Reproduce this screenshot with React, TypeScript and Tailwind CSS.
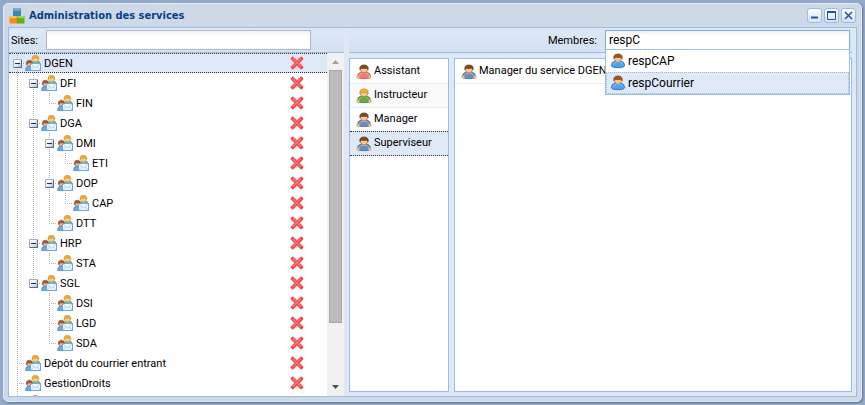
import { useState, type ReactNode } from "react";

type Segment = "line" | "blank" | "tee" | "end";

interface TreeRow {
  label?: string;
  segments: Segment[];
  open?: boolean;
  selected?: boolean;
}

const TREE: TreeRow[] = [
  { label: "DGEN", segments: ["tee"], open: true, selected: true },
  { label: "DFI", segments: ["line", "tee"], open: true },
  { label: "FIN", segments: ["line", "line", "end"] },
  { label: "DGA", segments: ["line", "tee"], open: true },
  { label: "DMI", segments: ["line", "line", "tee"], open: true },
  { label: "ETI", segments: ["line", "line", "line", "end"] },
  { label: "DOP", segments: ["line", "line", "tee"], open: true },
  { label: "CAP", segments: ["line", "line", "line", "end"] },
  { label: "DTT", segments: ["line", "line", "end"] },
  { label: "HRP", segments: ["line", "tee"], open: true },
  { label: "STA", segments: ["line", "line", "end"] },
  { label: "SGL", segments: ["line", "end"], open: true },
  { label: "DSI", segments: ["line", "blank", "tee"] },
  { label: "LGD", segments: ["line", "blank", "tee"] },
  { label: "SDA", segments: ["line", "blank", "end"] },
  { label: "Dépôt du courrier entrant", segments: ["tee"] },
  { label: "GestionDroits", segments: ["tee"] },
  { segments: ["tee"] },
];

function TreeLines({ kind }: { kind: Segment }) {
  const paths: Record<Segment, string> = {
    line: "M8.5 0V20",
    blank: "",
    tee: "M8.5 0V20M10 10.5H16",
    end: "M8.5 0V11M10 10.5H16",
  };
  return (
    <svg width="16" height="20" viewBox="0 0 16 20" className="block" shapeRendering="crispEdges" aria-hidden="true">
      <path d={paths[kind]} stroke="#b4b4b4" strokeDasharray="1 1" fill="none" />
    </svg>
  );
}

function ToggleIcon() {
  return (
    <svg width="9" height="9" viewBox="0 0 9 9" className="block" shapeRendering="crispEdges" aria-hidden="true">
      <defs>
        <linearGradient id="toggleFill" x1="0" y1="0" x2="1" y2="1">
          <stop offset="0.3" stopColor="#fff" />
          <stop offset="1" stopColor="#a9b8cf" />
        </linearGradient>
      </defs>
      <rect x="0.5" y="0.5" width="8" height="8" fill="url(#toggleFill)" stroke="#a3b1c8" />
      <path d="M8.5 1V8.5H1" stroke="#526a91" fill="none" />
      <path d="M2 4.5H7" stroke="#1d2d50" />
    </svg>
  );
}

function GroupIcon() {
  return (
    <svg width="16" height="16" viewBox="0 0 16 16" className="block shrink-0" aria-hidden="true">
      <path d="M7 9.5V8.5Q7.5 5.6 10.4 5.6Q15 5.6 15.6 9.5Z" fill="#7fc271" stroke="#4b9445" strokeWidth="0.7" />
      <circle cx="10.4" cy="3.9" r="2.9" fill="#fad0a2" stroke="#c98f45" strokeWidth="0.6" />
      <path d="M7 4.8Q6.5 0.2 10.4 0.2Q14.3 0.2 13.8 4.8L12.6 3.1Q10.4 3.7 8.3 3.1Z" fill="#eda92f" stroke="#cf922d" strokeWidth="0.5" />
      <path d="M0.7 15.6Q0.5 11.2 4 11L7 12V15.6Z" fill="#62adf1" stroke="#3479c7" strokeWidth="0.7" />
      <circle cx="4.3" cy="8.8" r="2.6" fill="#f4ba8b" stroke="#9a582d" strokeWidth="0.6" />
      <path d="M1.4 9.6Q0.9 5.2 4.4 5.2Q7.7 5.3 7.2 8.2L3.1 8Z" fill="#a75d32" stroke="#81401e" strokeWidth="0.5" />
      <rect x="5.5" y="8.5" width="10" height="7" fill="#eef6ff" stroke="#73a5e2" />
      <path d="M6 9L10.5 13L15 9M6 15L9 11.8M15 15L12 11.8" stroke="#a6c8ee" strokeWidth="0.8" fill="none" />
    </svg>
  );
}

interface Palette {
  hair: string;
  hairEdge: string;
  body: string;
  bodyEdge: string;
  light: string;
  tie?: boolean;
  hands?: boolean;
}

const PALETTES = {
  red: { hair: "#7a4924", hairEdge: "#5f3818", body: "#f47c7c", bodyEdge: "#cc5252", light: "#ffa9a6", hands: true },
  green: { hair: "#f2b32d", hairEdge: "#c48716", body: "#66ad43", bodyEdge: "#3c7d26", light: "#91cd6c", hands: true },
  suit: { hair: "#7a4924", hairEdge: "#5f3818", body: "#5f93c8", bodyEdge: "#3a6ba2", light: "#8db6de", tie: true, hands: true },
  member: { hair: "#9a5820", hairEdge: "#6d3a12", body: "#4ca6f6", bodyEdge: "#235fae", light: "#8accff" },
} satisfies Record<string, Palette>;

function PersonIcon({ kind }: { kind: keyof typeof PALETTES }) {
  const p: Palette = PALETTES[kind];
  return (
    <svg width="16" height="16" viewBox="0 0 16 16" className="block shrink-0" aria-hidden="true">
      <path d="M1.4 12.6Q1.5 8.8 5 8.2H11Q14.5 8.8 14.6 12.6Q14.5 14.6 8 14.6Q1.5 14.6 1.4 12.6Z" fill={p.body} stroke={p.bodyEdge} strokeWidth="0.8" />
      <path d="M3.3 11.5Q3.8 9.6 5.8 9.4M12.7 11.5Q12.2 9.6 10.2 9.4" stroke={p.light} fill="none" />
      {p.hands && (
        <>
          <circle cx="2.4" cy="13" r="1.4" fill="#ffcf9c" stroke="#bd8150" strokeWidth="0.6" />
          <circle cx="13.6" cy="13" r="1.4" fill="#ffcf9c" stroke="#bd8150" strokeWidth="0.6" />
        </>
      )}
      {p.tie && (
        <>
          <path d="M5.8 8H10.2L8 12Z" fill="#e5eef8" />
          <path d="M7.5 8.5H8.5L8.7 11.6L8 12.8L7.3 11.6Z" fill="#d34342" />
        </>
      )}
      <ellipse cx="8" cy="5.4" rx="3.6" ry="3.4" fill="#fbc796" stroke="#a76d40" strokeWidth="0.7" />
      <path d="M3.9 5.8Q2.9 1 8 0.9Q13.1 1 12.1 5.8L10.9 4.2Q8.2 4.9 5.2 4.2Z" fill={p.hair} stroke={p.hairEdge} strokeWidth="0.6" />
      {kind === "member" && <path d="M5.6 8.4Q8 10.2 10.4 8.4" fill="#fbc796" />}
    </svg>
  );
}

function DeleteIcon() {
  return (
    <svg width="14" height="14" viewBox="0 0 14 14" className="block" aria-hidden="true">
      <path d="M2.8 2.8L11.2 11.2M11.2 2.8L2.8 11.2" stroke="#f9b4b4" strokeWidth="4.4" strokeLinecap="round" />
      <path d="M2.8 2.8L11.2 11.2M11.2 2.8L2.8 11.2" stroke="#ec3f44" strokeWidth="3.2" strokeLinecap="square" />
      <path d="M2.6 2.6L11 11M11 2.6L2.6 11" stroke="#fb7577" strokeWidth="1.4" />
    </svg>
  );
}

function CubesIcon() {
  return (
    <svg width="16" height="16" viewBox="0 0 16 16" className="block shrink-0" aria-hidden="true">
      <rect x="4" y="0.5" width="8" height="7.5" fill="#3b87ad" />
      <path d="M4 0.5H12L11 2.8H5Z" fill="#71b4cf" />
      <rect x="0.5" y="8" width="7.5" height="7.5" fill="#f38b14" />
      <path d="M0.5 8H8L7 10.3H1.5Z" fill="#ffc35a" />
      <rect x="8" y="8" width="7.5" height="7.5" fill="#65ac1e" />
      <path d="M8 8H15.5L14.5 10.3H9Z" fill="#a2d554" />
    </svg>
  );
}

function WindowButton({ label, children }: { label: string; children: ReactNode }) {
  return (
    <button
      type="button"
      aria-label={label}
      className="flex size-[15px] items-center justify-center rounded-[3px] border border-[#99bce8] bg-linear-to-b from-white to-[#d4e3f8]"
    >
      <svg width="11" height="11" viewBox="0 0 11 11" className="block" stroke="#2850a7" fill="none" aria-hidden="true">
        {children}
      </svg>
    </button>
  );
}

function TreePanel() {
  return (
    <div className="flex min-h-0 flex-1 bg-white">
      <ul className="min-w-0 flex-1 overflow-hidden" aria-label="Sites">
        {TREE.map((row, index) => (
          <li
            key={index}
            className={`relative flex h-5 items-center ${
              row.selected
                ? "bg-[#dfe8f6] before:pointer-events-none before:absolute before:inset-0 before:border-y before:border-dotted before:border-[#333]"
                : ""
            }`}
          >
            {row.segments.map((kind, i) => (
              <span key={i} className="relative">
                <TreeLines kind={kind} />
                {row.open && i === row.segments.length - 1 && (
                  <button type="button" aria-label={`Réduire ${row.label}`} className="absolute top-1.5 left-1">
                    <ToggleIcon />
                  </button>
                )}
              </span>
            ))}
            <GroupIcon />
            <span className="ml-[3px] flex-1 pt-0.5 whitespace-nowrap">{row.label}</span>
            {row.label && (
              <button type="button" aria-label={`Supprimer ${row.label}`} className="mr-[23px]">
                <DeleteIcon />
              </button>
            )}
          </li>
        ))}
      </ul>
      <div className="flex w-[17px] shrink-0 flex-col items-center bg-[#f1f1f1]" aria-hidden="true">
        <svg width="17" height="17" viewBox="0 0 17 17" className="block shrink-0">
          <path d="M5 11L8.5 7L12 11Z" fill="#a0a0a0" />
        </svg>
        <div className="flex min-h-0 w-full flex-1 flex-col px-0.5">
          <div className="h-[82%] border border-[#a8a8a8] bg-[#bcbcbc]" />
        </div>
        <svg width="17" height="17" viewBox="0 0 17 17" className="block shrink-0">
          <path d="M5 6L8.5 10L12 6Z" fill="#505050" />
        </svg>
      </div>
    </div>
  );
}

const ROLES: { label: string; kind: keyof typeof PALETTES }[] = [
  { label: "Assistant", kind: "red" },
  { label: "Instructeur", kind: "green" },
  { label: "Manager", kind: "suit" },
  { label: "Superviseur", kind: "suit" },
];

function RoleList() {
  return (
    <ul className="w-[100px] shrink-0 border border-[#99bce8] bg-white pt-px" aria-label="Rôles">
      {ROLES.map((role, i) => (
        <li
          key={role.label}
          className={
            i === 3
              ? "-mt-px border-y border-dotted border-[#333] bg-[#dfe8f6]"
              : i === 1
                ? "border-b border-[#ededed] bg-[#fafafa]"
                : "border-b border-[#ededed]"
          }
        >
          <button type="button" className="flex h-[23px] w-full items-center gap-0.5 pl-1.5">
            <PersonIcon kind={role.kind} />
            {role.label}
          </button>
        </li>
      ))}
    </ul>
  );
}

function MemberSearch() {
  const [query, setQuery] = useState("respC");
  return (
    <div className="relative w-[245px]">
      <input
        id="membres"
        type="text"
        value={query}
        autoFocus
        onChange={(e) => setQuery(e.target.value)}
        className="block h-5 w-full border border-[#7eadd9] bg-white bg-linear-to-b from-[#f0f0f0] to-white to-25% px-[3px] text-xs outline-none"
      />
      <ul className="absolute inset-x-0 top-[19px] z-10 border border-[#99bce8] bg-white text-xs">
        <li>
          <button type="button" className="flex h-[22px] w-full items-center gap-0.5 px-1">
            <PersonIcon kind="member" />
            respCAP
          </button>
        </li>
        <li>
          <button
            type="button"
            className="flex h-[22px] w-full items-center gap-0.5 border border-dotted border-[#a3bae9] bg-[#dfe8f6] px-[3px]"
          >
            <PersonIcon kind="member" />
            respCourrier
          </button>
        </li>
      </ul>
    </div>
  );
}

export default function App() {
  return (
    <div className="h-screen overflow-hidden bg-[#92a9cb] p-[3px] font-[Roboto,sans-serif] text-[11px] text-black">
      <main className="flex h-full flex-col rounded-[5px] border border-[#e4ebf4] bg-[#ced9e7] px-1 pb-1 shadow-[1px_1px_2px_#60708c]">
        <header className="flex h-[23px] shrink-0 items-center gap-1 pr-px pl-px">
          <CubesIcon />
          <h1 className="flex-1 pt-0.5 font-['DejaVu_Sans_Condensed','DejaVu_Sans',sans-serif] font-bold text-[#04408c]">
            Administration des services
          </h1>
          <div className="flex gap-0.5">
            <WindowButton label="Réduire">
              <path d="M2 7.5H9" strokeWidth="2" />
            </WindowButton>
            <WindowButton label="Agrandir">
              <path d="M1.5 3V9.5H9.5V3M1 2.5H10" />
              <path d="M1 2H10" strokeWidth="2" />
            </WindowButton>
            <WindowButton label="Fermer">
              <path d="M2 2L9 9M9 2L2 9" strokeWidth="1.6" />
            </WindowButton>
          </div>
        </header>

        <div className="flex min-h-0 flex-1 gap-[5px] border border-[#99bce8] bg-[#dfe8f6] pr-1">
          <section className="flex w-[335px] shrink-0 flex-col">
            <div className="flex h-[25px] shrink-0 items-center border-b border-[#99bce8] bg-linear-to-b from-[#dfe9f5] to-[#d3e1f1] pl-0.5">
              <label htmlFor="sites" className="w-[35px] pt-0.5">
                Sites:
              </label>
              <input
                id="sites"
                type="text"
                className="h-5 w-[265px] border border-[#b5b8c8] bg-white bg-linear-to-b from-[#f0f0f0] to-white to-25% px-[3px] text-xs outline-none"
              />
            </div>
            <TreePanel />
          </section>

          <section className="flex min-w-0 flex-1 flex-col">
            <div className="flex h-[25px] shrink-0 items-center justify-end gap-2 border-b border-[#99bce8] bg-linear-to-b from-[#dfe9f5] to-[#d3e1f1] pr-0.5">
              <label htmlFor="membres" className="pt-0.5">
                Membres:
              </label>
              <MemberSearch />
            </div>
            <div className="flex min-h-0 flex-1 gap-[5px] pt-[5px] pb-1">
              <RoleList />
              <ul className="min-w-0 flex-1 border border-[#99bce8] bg-white pt-px" aria-label="Membres du rôle">
                <li className="flex h-6 items-center gap-0.5 border-b border-[#ededed] pl-1.5">
                  <PersonIcon kind="suit" />
                  Manager du service DGEN
                </li>
              </ul>
            </div>
          </section>
        </div>
      </main>
    </div>
  );
}
